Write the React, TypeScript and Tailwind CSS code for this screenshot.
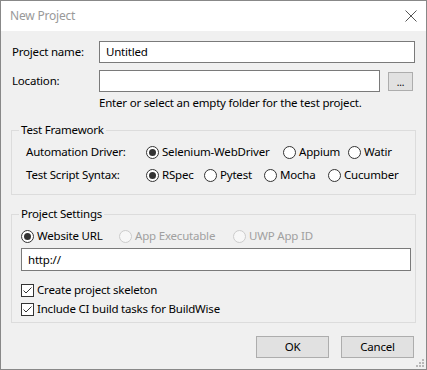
import React from "react";

const font = { fontFamily: '"Noto Sans", "Open Sans", sans-serif' };

function Radio({ checked, disabled, label }: { checked?: boolean; disabled?: boolean; label: string }) {
  return (
    <span className={`flex items-center h-[16px] ${disabled ? "text-[#a0a0a0]" : "text-black"}`}>
      <span
        className={`w-[13px] h-[13px] rounded-full border flex items-center justify-center shrink-0 ${
          disabled ? "border-[#cccccc] bg-[#f7f7f7]" : "border-[#333333] bg-white"
        }`}
      >
        {checked && <span className="w-[7px] h-[7px] rounded-full bg-[#333333]" />}
      </span>
      <span className="ml-[3px]">{label}</span>
    </span>
  );
}

function Checkbox({ label }: { label: string }) {
  return (
    <div className="flex items-center h-[16px]">
      <span className="w-[13px] h-[13px] border border-[#333333] bg-white flex items-center justify-center shrink-0">
        <svg width="11" height="11" viewBox="0 0 11 11">
          <path d="M1.5 5.5 L4 8 L9.5 2.5" stroke="#333" strokeWidth="1" fill="none" />
        </svg>
      </span>
      <span className="ml-[3px]">{label}</span>
    </div>
  );
}

export default function App() {
  return (
    <div
      className="w-[427px] h-[370px] flex flex-col border border-[#888888] bg-[#f0f0f0] text-[11.5px] leading-[16px] tracking-[-0.2px] text-black overflow-hidden"
      style={font}
    >
      {/* Title bar */}
      <div className="h-[30px] bg-white flex items-center justify-between pl-[9px] pr-[9px] shrink-0">
        <span className="text-[#999999] text-[12px]">New Project</span>
        <svg width="12" height="12" viewBox="0 0 12 12">
          <path d="M0.5 0.5 L11.5 11.5 M11.5 0.5 L0.5 11.5" stroke="#555" strokeWidth="1" />
        </svg>
      </div>

      <div className="flex-1 flex flex-col px-[10px] relative">
        {/* Project name */}
        <div className="flex items-center mt-[10px]">
          <span className="w-[88px] pl-[1px]">Project name:</span>
          <div className="w-[316px] h-[22px] border border-[#7a7a7a] bg-white flex items-center pl-[6px]">Untitled</div>
        </div>
        {/* Location */}
        <div className="flex items-center mt-[7px]">
          <span className="w-[88px] pl-[1px]">Location:</span>
          <div className="w-[281px] h-[22px] border border-[#7a7a7a] bg-white" />
          <div className="ml-[8px] w-[25px] h-[19px] border border-[#adadad] bg-[#e1e1e1] flex items-end justify-center text-[10px] leading-none pb-[3px]">
            ...
          </div>
        </div>
        <div className="ml-[88px] mt-[3px]">Enter or select an empty folder for the test project.</div>

        {/* Test Framework */}
        <fieldset className="mt-[11px] w-[405px] h-[73px] border border-[#dcdcdc]">
          <legend className="ml-[7px] px-[2px]">Test Framework</legend>
          <div className="pl-[14px]">
            <div className="flex items-center h-[16px] mt-[6px]">
              <span className="w-[120px]">Automation Driver:</span>
              <span className="flex w-[137px]"><Radio checked label="Selenium-WebDriver" /></span>
              <span className="flex w-[65px]"><Radio label="Appium" /></span>
              <span className="flex"><Radio label="Watir" /></span>
            </div>
            <div className="flex items-center h-[16px] mt-[7px]">
              <span className="w-[120px]">Test Script Syntax:</span>
              <span className="flex w-[58px]"><Radio checked label="RSpec" /></span>
              <span className="flex w-[60px]"><Radio label="Pytest" /></span>
              <span className="flex w-[64px]"><Radio label="Mocha" /></span>
              <span className="flex"><Radio label="Cucumber" /></span>
            </div>
          </div>
        </fieldset>

        {/* Project Settings */}
        <fieldset className="mt-[11px] w-[405px] h-[117px] border border-[#dcdcdc]">
          <legend className="ml-[7px] px-[2px]">Project Settings</legend>
          <div className="pl-[9px]">
            <div className="flex items-center h-[16px] mt-[6px]">
              <span className="flex w-[98px]"><Radio checked label="Website URL" /></span>
              <span className="flex w-[114px]"><Radio disabled label="App Executable" /></span>
              <span className="flex"><Radio disabled label="UWP App ID" /></span>
            </div>
            <div className="mt-[4px] w-[390px] h-[23px] border border-[#7a7a7a] bg-white flex items-center pl-[6px]">http://</div>
            <div className="mt-[11px]"><Checkbox label="Create project skeleton" /></div>
            <div className="mt-[3px]"><Checkbox label="Include CI build tasks for BuildWise" /></div>
          </div>
        </fieldset>

        {/* Buttons */}
        <div className="flex justify-end mt-[13px] pr-[2px]">
          <div className="w-[73px] h-[22px] border border-[#adadad] bg-[#e1e1e1] flex items-center justify-center">OK</div>
          <div className="ml-[12px] w-[73px] h-[22px] border border-[#adadad] bg-[#e1e1e1] flex items-center justify-center">Cancel</div>
        </div>

        <svg className="absolute right-[1px] bottom-[1px]" width="10" height="10" viewBox="0 0 10 10">
          <g fill="#b8b8b8">
            <rect x="7" y="1" width="2" height="2" />
            <rect x="4" y="4" width="2" height="2" />
            <rect x="7" y="4" width="2" height="2" />
            <rect x="1" y="7" width="2" height="2" />
            <rect x="4" y="7" width="2" height="2" />
            <rect x="7" y="7" width="2" height="2" />
          </g>
        </svg>
      </div>
    </div>
  );
}
